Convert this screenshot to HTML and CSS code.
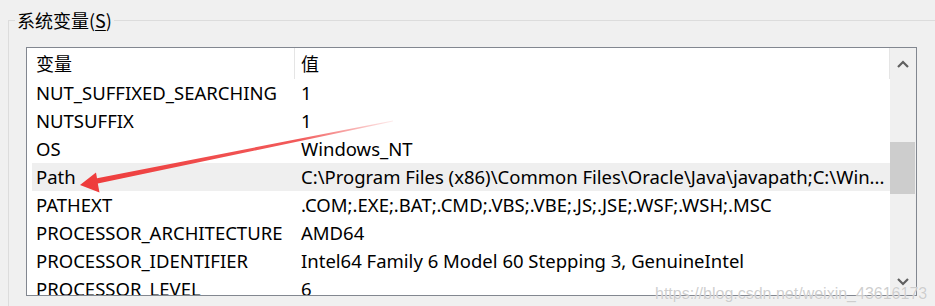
FILE: index.html
```html
<!DOCTYPE html>
<html lang="zh-CN">
<head>
  <meta charset="UTF-8" />
  <title>系统变量</title>
  <link rel="stylesheet" href="styles.css">
</head>
<body>
  <div class="window">
    <fieldset class="group">
      <legend class="group-title">系统变量(<u>S</u>)</legend>

      <div class="listview">
        <div class="rows">
          <div class="row header">
            <span class="cell">变量</span>
            <span class="cell">值</span>
          </div>
          <div class="row"><span class="cell">NUT_SUFFIXED_SEARCHING</span><span class="cell">1</span></div>
          <div class="row"><span class="cell">NUTSUFFIX</span><span class="cell">1</span></div>
          <div class="row"><span class="cell">OS</span><span class="cell">Windows_NT</span></div>
          <div class="row selected"><span class="cell">Path</span><span class="cell">C:\Program Files (x86)\Common Files\Oracle\Java\javapath;C:\Win...</span></div>
          <div class="row"><span class="cell">PATHEXT</span><span class="cell">.COM;.EXE;.BAT;.CMD;.VBS;.VBE;.JS;.JSE;.WSF;.WSH;.MSC</span></div>
          <div class="row"><span class="cell">PROCESSOR_ARCHITECTURE</span><span class="cell">AMD64</span></div>
          <div class="row"><span class="cell">PROCESSOR_IDENTIFIER</span><span class="cell">Intel64 Family 6 Model 60 Stepping 3, GenuineIntel</span></div>
          <div class="row"><span class="cell">PROCESSOR_LEVEL</span><span class="cell">6</span></div>
        </div>

        <div class="scrollbar">
          <div class="sb-btn">
            <svg width="12" height="8" viewBox="0 0 12 8"><polyline points="1,7 6,2 11,7" fill="none" stroke="#606060" stroke-width="2.2"/></svg>
          </div>
          <div class="sb-track"><div class="sb-thumb"></div></div>
          <div class="sb-btn down">
            <svg width="12" height="8" viewBox="0 0 12 8"><polyline points="1,1 6,6 11,1" fill="none" stroke="#606060" stroke-width="2.2"/></svg>
          </div>
        </div>
      </div>
    </fieldset>

    <!-- red annotation arrow drawn over the list -->
    <svg class="arrow" width="935" height="306" viewBox="0 0 935 306">
      <defs>
        <linearGradient id="fade" x1="393" y1="113" x2="81" y2="176" gradientUnits="userSpaceOnUse">
          <stop offset="0" stop-color="#f04848" stop-opacity="0.1"/>
          <stop offset="0.3" stop-color="#f04848" stop-opacity="0.9"/>
          <stop offset="1" stop-color="#ee3b3b"/>
        </linearGradient>
      </defs>
      <polygon fill="url(#fade)" points="80,177 96,164.5 97,170.2 393,112.4 393,113.6 97.8,175.6 99.5,184.5"/>
    </svg>

    <div class="watermark">https://blog.csdn.net/weixin_43616173</div>
  </div>
</body>
</html>
```

FILE: styles.css
```css
body {
  margin: 0;
  background: #f0f0f0;
  font-family: "Noto Sans", "Noto Sans CJK SC", sans-serif;
  font-size: 18.5px;
  color: #000;
  height: 306px;
  overflow: hidden;
}
.window {
  position: relative;
  height: 306px;
}

/* group box */
.group {
  margin: 8px 0 0 8px;
  padding: 0 0 20px 6px;
  border: 1px solid #dcdcdc;
  border-right: none;
  min-width: 0;
}
.group-title {
  padding: 0 2px;
  line-height: 24px;
  font-family: "Noto Sans CJK SC", sans-serif;
  font-size: 18px;
}
.group-title u {
  text-underline-offset: 2px;
}

/* list view */
.listview {
  display: flex;
  margin: 15px 0 0 11px;
  width: 889px;
  height: 247px;
  border: 1px solid #828790;
  background: white;
  overflow: hidden;
}
.rows {
  flex: 1;
  padding-left: 5px;
  overflow: hidden;
}
.row {
  display: grid;
  grid-template-columns: 263px 1fr;
  height: 28px;
  line-height: 28px;
  white-space: nowrap;
}
.row .cell {
  padding-left: 4px;
  overflow: hidden;
}
.row .cell + .cell {
  padding-left: 6px;
}
.row.header {
  height: 31px;
  line-height: 31px;
  font-family: "Noto Sans CJK SC", sans-serif;
  font-size: 18px;
}
.row.header .cell {
  border-right: 1px solid #e5e5e5;
}
.row.selected {
  background: #efefef;
}

/* scrollbar */
.scrollbar {
  width: 26px;
  display: flex;
  flex-direction: column;
  background: #f0f0f0;
}
.sb-btn {
  height: 31px;
  display: flex;
  align-items: center;
  justify-content: center;
}
.sb-btn.down {
  padding-top: 4px;
  height: 27px;
}
.sb-track {
  flex: 1;
}
.sb-thumb {
  margin: 63px 1px 0 0;
  height: 52px;
  background: #cdcdcd;
}

/* overlays */
.arrow {
  position: absolute;
  left: 0;
  top: 0;
  pointer-events: none;
}
.watermark {
  position: absolute;
  left: 655px;
  top: 277px;
  font-family: "Liberation Sans", Arial, sans-serif;
  font-size: 16px;
  color: rgba(190, 190, 190, 0.75);
  text-shadow: 0 0 1px #fff;
  white-space: nowrap;
}
```
